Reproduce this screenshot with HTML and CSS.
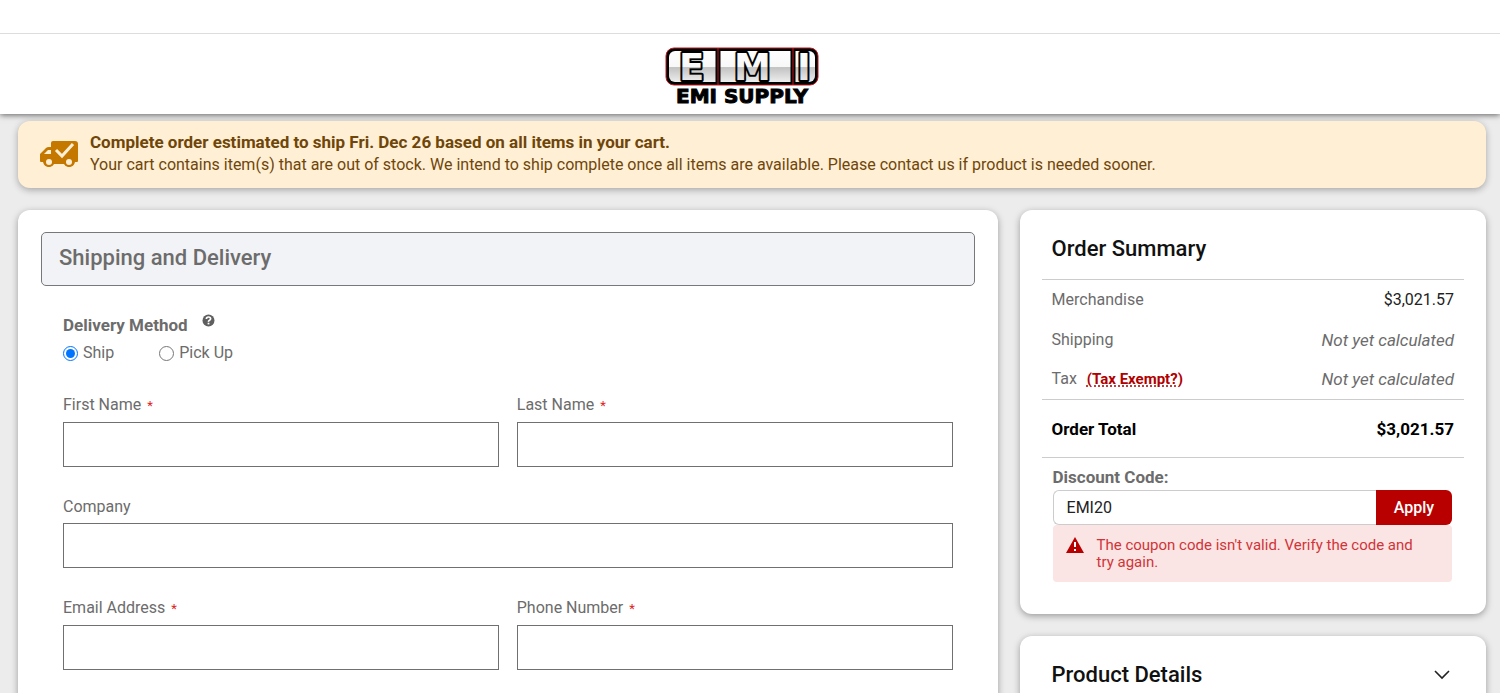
FILE: index.html
```html
<!DOCTYPE html>
<html lang="en">
<head>
    <meta charset="UTF-8">
    <meta name="viewport" content="width=device-width, initial-scale=1.0">
    <title>Checkout - EMI Supply</title>
    <link rel="stylesheet" href="styles.css">
</head>
<body>

<div class="topStrip"></div>
<header class="header">
    <a href="#" class="logo" aria-label="EMI Supply">
        <svg width="154" height="64" viewBox="0 0 154 64">
            <defs>
                <linearGradient id="chrome" gradientUnits="userSpaceOnUse" x1="0" y1="3" x2="0" y2="38">
                    <stop offset="0" stop-color="#fff"/>
                    <stop offset="0.5" stop-color="#f8f8f8"/>
                    <stop offset="0.53" stop-color="#c2c2c2"/>
                    <stop offset="1" stop-color="#f4f4f4"/>
                </linearGradient>
            </defs>
            <rect x="1" y="2" width="152" height="37" rx="8" fill="#000" stroke="#c4161c" stroke-width="1"/>
            <rect x="4" y="5" width="146" height="31" rx="6" fill="url(#chrome)"/>
            <path fill="none" stroke="#000" stroke-width="5" d="M53 3v35M128 3v35"/>
            <path fill="none" stroke="#c4161c" d="M53 2v37M128 2v37"/>
            <text class="logoMark" x="14 69 132" y="34" fill="url(#chrome)">EMI</text>
            <text class="logoName" x="77" y="57" text-anchor="middle">EMI SUPPLY</text>
        </svg>
    </a>
</header>

<div class="alert">
    <svg class="truck" width="38" height="28" viewBox="0 0 38 28">
        <path fill="#c47800" d="M13 1h22a3 3 0 0 1 3 3v17a1 1 0 0 1-1 1h-2a6 6 0 0 1-11 2H14a6 6 0 0 1-11-2H1a1 1 0 0 1-1-1v-7l6-6q1-1 3-1h2V3a2 2 0 0 1 2-2z"/>
        <path fill="#ffefd5" d="M4 14l4-4h3v4zM14 24h10v4H14z"/>
        <path fill="none" stroke="#ffefd5" stroke-width="3" d="M16 10l6 6L33 4"/>
        <circle cx="9" cy="22" r="5" fill="#c47800"/>
        <circle cx="9" cy="22" r="3" fill="#ffefd5"/>
        <circle cx="29" cy="22" r="5" fill="#c47800"/>
        <circle cx="29" cy="22" r="3" fill="#ffefd5"/>
    </svg>
    <div>
        <strong>Complete order estimated to ship Fri. Dec 26 based on all items in your cart.</strong>
        <p>Your cart contains item(s) that are out of stock. We intend to ship complete once all items are available. Please contact us if product is needed sooner.</p>
    </div>
</div>

<div class="checkout">
    <main class="card shipping">
        <h2 class="sectionTitle">Shipping and Delivery</h2>
        <form class="shippingForm">
            <fieldset class="delivery">
                <legend>Delivery Method
                    <svg class="help" width="13" height="13" viewBox="0 0 13 13">
                        <circle cx="6.5" cy="6.5" r="6" fill="#5f5f5f"/>
                        <path fill="none" stroke="#fff" stroke-width="1.7" d="M4.4 5q0-2 2.1-2t2.1 1.8q0 .9-1.1 1.4t-1 1.6"/>
                        <rect x="5.6" y="8.7" width="1.8" height="1.7" fill="#fff"/>
                    </svg>
                </legend>
                <div class="options">
                    <label><input type="radio" name="delivery" checked> Ship</label>
                    <label><input type="radio" name="delivery"> Pick Up</label>
                </div>
            </fieldset>
            <div class="fields">
                <div class="field">
                    <label for="firstName">First Name <span class="required">*</span></label>
                    <input type="text" id="firstName">
                </div>
                <div class="field">
                    <label for="lastName">Last Name <span class="required">*</span></label>
                    <input type="text" id="lastName">
                </div>
                <div class="field wide">
                    <label for="company">Company</label>
                    <input type="text" id="company">
                </div>
                <div class="field">
                    <label for="email">Email Address <span class="required">*</span></label>
                    <input type="email" id="email">
                </div>
                <div class="field">
                    <label for="phone">Phone Number <span class="required">*</span></label>
                    <input type="tel" id="phone">
                </div>
            </div>
        </form>
    </main>

    <aside class="sidebar">
        <section class="card summary">
            <h2>Order Summary</h2>
            <table class="totals">
                <tr>
                    <th scope="row">Merchandise</th>
                    <td class="price">$3,021.57</td>
                </tr>
                <tr>
                    <th scope="row">Shipping</th>
                    <td class="pending">Not yet calculated</td>
                </tr>
                <tr>
                    <th scope="row">Tax <a href="#" class="exempt">(Tax Exempt?)</a></th>
                    <td class="pending">Not yet calculated</td>
                </tr>
                <tr class="orderTotal">
                    <th scope="row">Order Total</th>
                    <td>$3,021.57</td>
                </tr>
            </table>
            <form class="discount">
                <label for="discountCode">Discount Code:</label>
                <div class="codeRow">
                    <input type="text" id="discountCode" value="EMI20">
                    <button type="button">Apply</button>
                </div>
                <div class="error">
                    <svg width="18" height="16" viewBox="0 0 18 16">
                        <path fill="#b90000" d="M9 0l9 16H0z"/>
                        <path fill="#fff" d="M8 5h2v5H8zM8 12h2v2H8z"/>
                    </svg>
                    <p>The coupon code isn't valid. Verify the code and try again.</p>
                </div>
            </form>
        </section>

        <section class="card details">
            <button type="button" class="detailsToggle">
                Product Details
                <svg width="16" height="10" viewBox="0 0 16 10">
                    <path fill="none" stroke="#222" stroke-width="1.6" d="M1 1l7 7 7-7"/>
                </svg>
            </button>
        </section>
    </aside>
</div>

</body>
</html>
```
FILE: styles.css
```css
* {
    box-sizing: border-box;
}
body {
    margin: 0;
    height: 100vh;
    overflow: hidden;
    background-color: #ececec;
    color: #6c6c6c;
    font-family: Roboto, Arial, sans-serif;
    font-size: 16px;
    line-height: 20px;
}
h2, p {
    margin: 0;
}
input, button {
    font: inherit;
}
.topStrip {
    position: relative;
    z-index: 1;
    height: 34px;
    background-color: #fff;
    border-bottom: 1px solid #ddd;
}
.header {
    display: flex;
    justify-content: center;
    height: 80px;
    padding-top: 12px;
    padding-right: 16px;
    background-color: #fff;
    box-shadow: 0 1px 6px rgba(0, 0, 0, 0.6);
}
.logo svg {
    display: block;
}
.logoMark {
    font: bold 37px "DejaVu Sans", sans-serif;
    stroke: #000;
    stroke-width: 4px;
    stroke-linejoin: round;
    paint-order: stroke;
}
.logoName {
    font: bold 20px "DejaVu Sans", sans-serif;
    fill: #000;
    stroke: #000;
    stroke-width: 1px;
}
.alert {
    display: flex;
    align-items: center;
    gap: 12px;
    margin: 7px 14px 22px 18px;
    padding: 10px 22px 12px;
    border-radius: 12px;
    background-color: #ffefd5;
    color: #6f4609;
    line-height: 22px;
    box-shadow: 0 2px 7px rgba(0, 0, 0, 0.3);
}
.alert strong {
    font-size: 17px;
}
.checkout {
    display: grid;
    grid-template-columns: 2.1fr 1fr;
    align-items: start;
    gap: 22px;
    margin: 0 14px 0 18px;
}
.card {
    border-radius: 12px;
    background-color: #fff;
    box-shadow: 0 2px 7px rgba(0, 0, 0, 0.35);
}
.shipping {
    padding: 22px 23px;
}
.sectionTitle {
    padding: 13px 17px 15px;
    border: 1px solid #77787c;
    border-radius: 5px;
    background-color: #f2f3f6;
    font-size: 22px;
    font-weight: 500;
    line-height: 24px;
}
.shippingForm {
    padding: 27px 22px;
}
.delivery {
    margin: 0 0 32px;
    padding: 0;
    border: 0;
}
.delivery legend {
    padding: 0;
    font-size: 17px;
    font-weight: bold;
    line-height: 24px;
}
.help {
    margin-left: 10px;
    vertical-align: 4px;
}
.options {
    display: flex;
    gap: 45px;
    padding-top: 6px;
}
.options label {
    display: flex;
    align-items: center;
    gap: 5px;
}
.options input {
    width: 15px;
    height: 15px;
    margin: 0;
}
.fields {
    display: grid;
    grid-template-columns: 1fr 1fr;
    gap: 30px 18px;
}
.field {
    display: flex;
    flex-direction: column;
    gap: 6px;
}
.wide {
    grid-column: 1 / 3;
}
.field input {
    width: 100%;
    height: 45px;
    padding: 0 12px;
    border: 1px solid #707070;
    background-color: #fff;
}
.required {
    margin-left: 2px;
    color: #d22;
    font-size: 13px;
}
.sidebar {
    display: flex;
    flex-direction: column;
    gap: 22px;
}
.summary {
    padding: 22px 22px 32px;
}
.summary h2 {
    padding: 4px 10px 17px;
    color: #111;
    font-size: 22px;
    font-weight: 500;
    line-height: 26px;
}
.totals {
    width: 100%;
    border-collapse: collapse;
    border-top: 1px solid #ccc;
    border-bottom: 1px solid #ccc;
}
.totals th, .totals td {
    height: 40px;
    padding: 0 10px;
    font-weight: normal;
    text-align: left;
}
.totals td {
    text-align: right;
}
.totals .price {
    color: #222;
}
.totals .pending {
    font-size: 17px;
    font-style: italic;
}
.exempt {
    margin-left: 6px;
    color: #b00000;
    font-size: 15px;
    font-weight: bold;
    text-decoration: underline dotted;
}
.totals .orderTotal th, .totals .orderTotal td {
    height: 58px;
    border-top: 1px solid #ccc;
    color: #000;
    font-size: 17px;
    font-weight: bold;
}
.discount {
    padding: 9px 12px 0 11px;
}
.discount > label {
    font-size: 17px;
    font-weight: bold;
}
.codeRow {
    display: flex;
    margin-top: 2px;
}
.codeRow input {
    flex: 1;
    min-width: 0;
    height: 35px;
    padding: 0 13px;
    border: 1px solid #ccc;
    border-right: 0;
    border-radius: 6px 0 0 6px;
    color: #222;
}
.codeRow button {
    width: 76px;
    border: 0;
    border-radius: 0 6px 6px 0;
    background-color: #b90000;
    color: #fff;
    font-weight: 500;
}
.error {
    display: flex;
    gap: 13px;
    padding: 12px 28px 11px 13px;
    border-radius: 4px;
    background-color: #fae4e4;
    color: #d13438;
    font-size: 15px;
    line-height: 17px;
}
.error svg {
    flex: none;
}
.details {
    padding: 25px 22px;
}
.detailsToggle {
    display: flex;
    justify-content: space-between;
    align-items: center;
    width: 100%;
    padding: 4px 14px 4px 10px;
    border: 0;
    background: none;
    color: #111;
    font-size: 22px;
    font-weight: 500;
}
```
